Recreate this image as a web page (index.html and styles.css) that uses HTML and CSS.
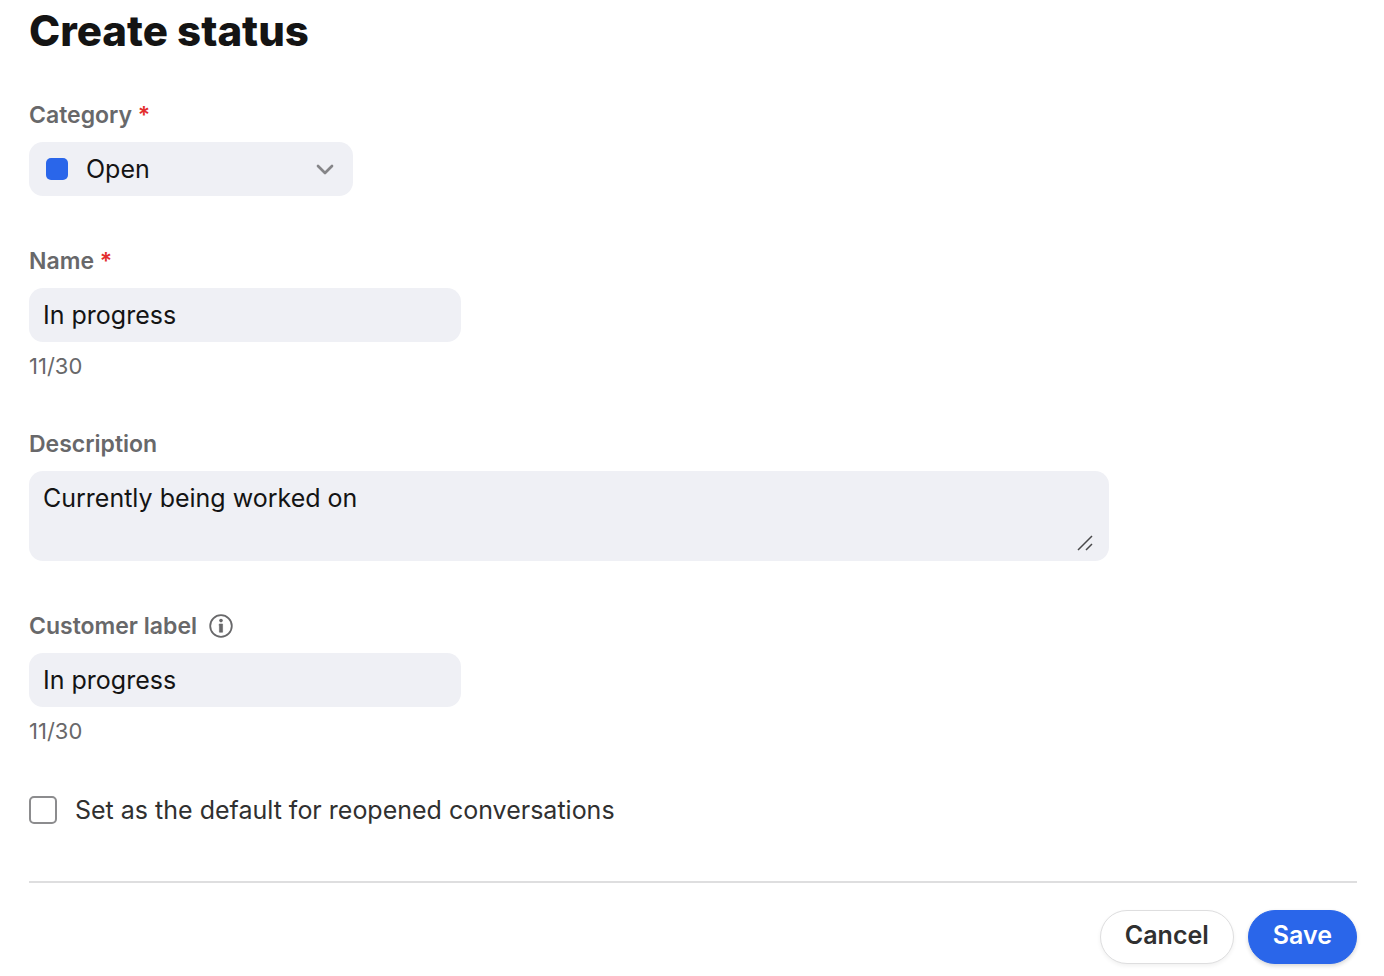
FILE: index.html
```html
<!DOCTYPE html>
<html lang="en">
<head>
    <meta charset="UTF-8">
    <meta name="viewport" content="width=device-width, initial-scale=1.0">
    <title>Create status</title>
    <link rel="stylesheet" href="styles.css">
</head>
<body>
    <form class="status-form">
        <h1>Create status</h1>

        <div class="field">
            <label for="category">Category <span class="required">*</span></label>
            <div class="select-box">
                <span class="swatch"></span>
                <select id="category" required>
                    <option selected>Open</option>
                    <option>Pending</option>
                    <option>Solved</option>
                </select>
                <svg class="chevron" width="20" height="12" viewBox="0 0 20 12" aria-hidden="true">
                    <path d="M3 3L10 10L17 3" fill="none" stroke="currentColor" stroke-width="2.7" stroke-linecap="round" stroke-linejoin="round"/>
                </svg>
            </div>
        </div>

        <div class="field">
            <label for="name">Name <span class="required">*</span></label>
            <input class="text-input" type="text" id="name" value="In progress" maxlength="30" required>
            <p class="counter">11/30</p>
        </div>

        <div class="field">
            <label for="description">Description</label>
            <div class="textarea-box">
                <textarea id="description" rows="1">Currently being worked on</textarea>
                <svg class="grip" width="16" height="16" viewBox="0 0 16 16" aria-hidden="true">
                    <path d="M1 15L15 1M9 15L15 9" fill="none" stroke="currentColor" stroke-width="1.5"/>
                </svg>
            </div>
        </div>

        <div class="field">
            <label for="customer-label" class="with-icon">Customer label
                <svg width="24" height="24" viewBox="0 0 24 24" aria-hidden="true">
                    <circle cx="12" cy="12" r="10.8" fill="none" stroke="currentColor" stroke-width="1.8"/>
                    <circle cx="12" cy="6.6" r="1.8" fill="currentColor"/>
                    <path d="M10.2 10H13.6V18.2H10.4V11.8H10.2Z" fill="currentColor" stroke="currentColor" stroke-width="0.6" stroke-linejoin="round"/>
                </svg>
            </label>
            <input class="text-input" type="text" id="customer-label" value="In progress" maxlength="30">
            <p class="counter">11/30</p>
        </div>

        <div class="check-row">
            <input type="checkbox" id="default-status">
            <label for="default-status">Set as the default for reopened conversations</label>
        </div>

        <div class="actions">
            <button type="button" class="btn">Cancel</button>
            <button type="submit" class="btn btn-primary">Save</button>
        </div>
    </form>
</body>
</html>
```

FILE: styles.css
```css
* {
    margin: 0;
    padding: 0;
    box-sizing: border-box;
}

body {
    font-family: Inter, sans-serif;
    font-size: 25px;
    color: #141414;
    background: #fff;
}

input,
select,
textarea,
button {
    font: inherit;
    color: inherit;
    border: none;
}

.status-form {
    padding: 4px 27px 12px 29px;
}

h1 {
    font-size: 42px;
    font-weight: 800;
    line-height: 54px;
    margin-bottom: 40px;
}

/* Fields */
.field {
    display: flex;
    flex-direction: column;
    align-items: flex-start;
    margin-bottom: 48px;
}

.field label {
    font-size: 23px;
    font-weight: 600;
    line-height: 34px;
    color: #68686a;
    margin-bottom: 10px;
}

.field .with-icon {
    display: flex;
    align-items: center;
    gap: 12px;
}

.required {
    color: #e32d2d;
}

.text-input {
    width: 432px;
    max-width: 100%;
    height: 54px;
    padding: 0 14px;
    background: #eff0f5;
    border-radius: 14px;
}

.counter {
    font-size: 22px;
    line-height: 26px;
    color: #68686a;
    margin-top: 11px;
}

/* Category dropdown */
.select-box {
    display: flex;
    align-items: center;
    gap: 18px;
    width: 324px;
    height: 54px;
    padding: 0 18px 0 17px;
    background: #eff0f5;
    border-radius: 14px;
}

.select-box select {
    flex: 1;
    appearance: none;
    background: transparent;
}

.swatch {
    width: 22px;
    height: 22px;
    background: #2a66ea;
    border-radius: 5px;
}

.chevron {
    color: #858588;
}

/* Description */
.textarea-box {
    display: flex;
    align-items: flex-end;
    width: 1080px;
    max-width: 100%;
    height: 90px;
    padding: 10px 16px 10px 14px;
    background: #eff0f5;
    border-radius: 14px;
}

.textarea-box textarea {
    flex: 1;
    height: 100%;
    line-height: 34px;
    background: transparent;
    resize: none;
}

.grip {
    color: #48484a;
}

/* Default checkbox */
.check-row {
    display: flex;
    align-items: center;
    gap: 18px;
    line-height: 36px;
    padding-bottom: 53px;
    border-bottom: 2px solid #dededf;
    color: #303030;
}

.check-row input {
    appearance: none;
    width: 28px;
    height: 28px;
    border: 2px solid #8c8c8e;
    border-radius: 5px;
}

/* Footer buttons */
.actions {
    display: flex;
    justify-content: flex-end;
    gap: 14px;
    padding-top: 27px;
}

.btn {
    height: 54px;
    padding: 0 24px 4px;
    font-weight: 600;
    color: #303030;
    background: #fff;
    border: 1px solid #dededf;
    border-radius: 27px;
    box-shadow: 0 2px 4px rgba(0, 0, 0, 0.06);
    cursor: pointer;
}

.btn-primary {
    color: #fff;
    background: #2a66ea;
    border-color: #2a66ea;
    box-shadow: 0 2px 4px rgba(0, 0, 0, 0.16);
}
```
